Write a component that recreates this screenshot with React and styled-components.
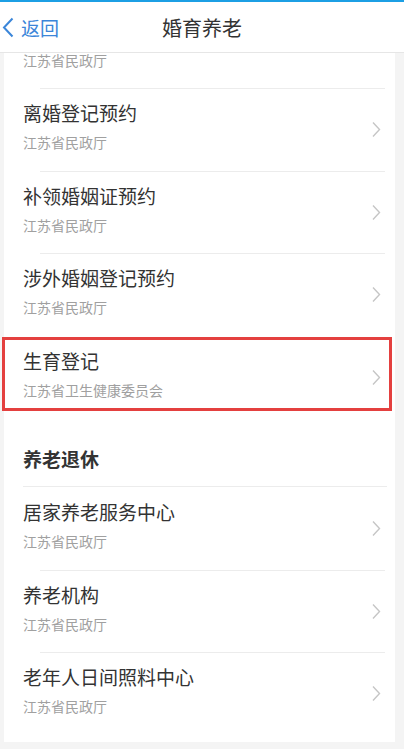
import React from "react";
import styled, { createGlobalStyle } from "styled-components";

const Global = createGlobalStyle`
  html, body { margin: 0; padding: 0; background: #f4f4f4; }
  body { font-family: "Noto Sans CJK SC", "Noto Sans", sans-serif; }
  * { box-sizing: border-box; }
`;

const Page = styled.div`
  width: 404px;
  height: 749px;
  overflow: hidden;
  display: flex;
  flex-direction: column;
  background: #f4f4f4;
`;

const TopStrip = styled.div`
  height: 2px;
  background: #1c9fe4;
  flex: none;
`;

const Header = styled.header`
  position: relative;
  height: 51px;
  flex: none;
  background: #fff;
  border-bottom: 1px solid #e6e6e6;
  display: flex;
  align-items: center;
  justify-content: center;
`;

const Back = styled.div`
  position: absolute;
  left: 2px;
  top: 0;
  bottom: 0;
  display: flex;
  align-items: center;
  gap: 7px;
  color: #3b86d9;
  font-size: 19px;
`;

const Title = styled.h1`
  margin: 0;
  font-size: 20px;
  font-weight: 400;
  color: #333;
`;

const Scroll = styled.div`
  flex: 1;
  overflow: hidden;
`;

const Card = styled.div`
  background: #fff;
  margin: 0 9px 0 4px;
  padding-bottom: 7px;
`;

const Row = styled.div`
  position: relative;
  height: ${(p) => p.$h || 83}px;
  display: flex;
  align-items: flex-start;
  padding: 12px 14px 0 19px;
  &::before {
    content: "";
    display: ${(p) => (p.$noLine ? "none" : "block")};
    position: absolute;
    top: 0;
    left: 36px;
    right: 10px;
    height: 1px;
    background: #ececec;
  }
`;

const PartialRow = styled(Row)`
  height: 35px;
  padding-top: 0;
  overflow: hidden;
  align-items: flex-start;
`;

const Texts = styled.div`
  flex: 1;
  display: flex;
  flex-direction: column;
`;

const ItemTitle = styled.div`
  font-size: 19px;
  line-height: 26px;
  color: #333;
`;

const ItemSub = styled.div`
  margin-top: ${(p) => (p.$first ? -3 : 6)}px;
  font-size: 14px;
  line-height: 20px;
  color: #a0a0a0;
`;

const ChevronBox = styled.div`
  align-self: stretch;
  display: flex;
  align-items: center;
  padding-bottom: 12px;
`;

const Highlight = styled.div`
  position: absolute;
  top: 1px;
  left: -2px;
  right: 3px;
  height: 74px;
  border: 3px solid #e4403f;
  pointer-events: none;
`;

const SectionHead = styled.div`
  height: 68px;
  margin: 0 8px 0 19px;
  border-bottom: 1px solid #ececec;
  display: flex;
  align-items: flex-end;
  padding-bottom: 14px;
  font-size: 19px;
  line-height: 26px;
  font-weight: 700;
  color: #333;
`;

const Chevron = () => (
  <svg width="9" height="17" viewBox="0 0 9 17" fill="none">
    <path d="M1 1.5 L7.5 8.5 L1 15.5" stroke="#c6c6c6" strokeWidth="1.4" />
  </svg>
);

const BackArrow = () => (
  <svg width="12" height="21" viewBox="0 0 12 21" fill="none">
    <path d="M10.5 1.5 L2 10.5 L10.5 19.5" stroke="#3b86d9" strokeWidth="2" />
  </svg>
);

const Item = ({ title, sub, h, noLine, highlight }) => (
  <Row $h={h} $noLine={noLine}>
    <Texts>
      <ItemTitle>{title}</ItemTitle>
      <ItemSub>{sub}</ItemSub>
    </Texts>
    <ChevronBox>
      <Chevron />
    </ChevronBox>
    {highlight && <Highlight />}
  </Row>
);

export default function App() {
  return (
    <Page>
      <Global />
      <TopStrip />
      <Header>
        <Back>
          <BackArrow />
          <span>返回</span>
        </Back>
        <Title>婚育养老</Title>
      </Header>
      <Scroll>
        <Card>
          <PartialRow $noLine>
            <Texts>
              <ItemSub $first>江苏省民政厅</ItemSub>
            </Texts>
          </PartialRow>
          <Item title="离婚登记预约" sub="江苏省民政厅" />
          <Item title="补领婚姻证预约" sub="江苏省民政厅" h={82} />
          <Item title="涉外婚姻登记预约" sub="江苏省民政厅" />
          <Item title="生育登记" sub="江苏省卫生健康委员会" noLine highlight />
          <SectionHead>养老退休</SectionHead>
          <Item title="居家养老服务中心" sub="江苏省民政厅" noLine />
          <Item title="养老机构" sub="江苏省民政厅" h={82} />
          <Item title="老年人日间照料中心" sub="江苏省民政厅" />
        </Card>
      </Scroll>
    </Page>
  );
}
